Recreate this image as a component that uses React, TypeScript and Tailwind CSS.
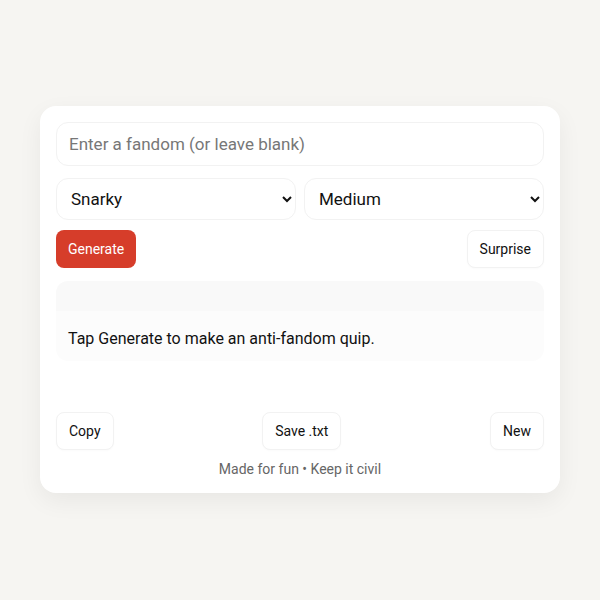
import React, { useState } from 'react';

const btn =
  'h-[38px] px-3 rounded-lg border border-[#f2f2f2] bg-white text-[14px] text-[#111] shadow-[0_1px_2px_rgba(0,0,0,0.02)]';

export default function App() {
  const [fandom, setFandom] = useState('');
  const [tone, setTone] = useState('Snarky');
  const [length, setLength] = useState('Medium');

  return (
    <div
      className="w-[600px] h-[600px] bg-[#f6f5f2] flex items-start justify-center pt-[106px]"
      style={{ fontFamily: 'Roboto, "Noto Sans", sans-serif' }}
    >
      <div className="w-[520px] bg-white rounded-2xl px-4 pt-4 pb-[13px] shadow-[0_8px_24px_rgba(0,0,0,0.06)] flex flex-col">
        {/* fandom input */}
        <input
          value={fandom}
          onChange={(e) => setFandom(e.target.value)}
          placeholder="Enter a fandom (or leave blank)"
          className="h-[44px] w-full rounded-xl border border-[#f2f2f2] px-3 text-[17px] text-[#111] placeholder:text-[#777] outline-none"
        />

        {/* tone + length */}
        <div className="mt-3 grid grid-cols-2 gap-2">
          <select
            value={tone}
            onChange={(e) => setTone(e.target.value)}
            className="h-[42px] rounded-xl border border-[#f2f2f2] bg-white pl-[10px] pr-1 text-[17px] text-[#111] outline-none"
          >
            <option>Snarky</option>
            <option>Dry</option>
            <option>Savage</option>
          </select>
          <select
            value={length}
            onChange={(e) => setLength(e.target.value)}
            className="h-[42px] rounded-xl border border-[#f2f2f2] bg-white pl-[10px] pr-1 text-[17px] text-[#111] outline-none"
          >
            <option>Short</option>
            <option>Medium</option>
            <option>Long</option>
          </select>
        </div>

        <div className="mt-[10px] flex items-center justify-between">
          <button className="h-[38px] px-3 rounded-lg bg-[#d63d2a] text-white text-[14px]">
            Generate
          </button>
          <button className={btn}>Surprise</button>
        </div>

        {/* output */}
        <div className="mt-[13px] rounded-xl overflow-hidden bg-[#fcfcfc]">
          <div className="h-[30px] bg-[#f9f9f9]" />
          <p className="px-3 pt-[16px] pb-[10px] text-[16px] text-[#111]">
            Tap Generate to make an anti-fandom quip.
          </p>
        </div>

        <div className="mt-[51px] flex items-center justify-between">
          <button className={btn}>Copy</button>
          <button className={btn}>Save .txt</button>
          <button className={btn}>New</button>
        </div>

        <p className="mt-[9px] text-center text-[14px] text-[#666]">
          Made for fun • Keep it civil
        </p>
      </div>
    </div>
  );
}
